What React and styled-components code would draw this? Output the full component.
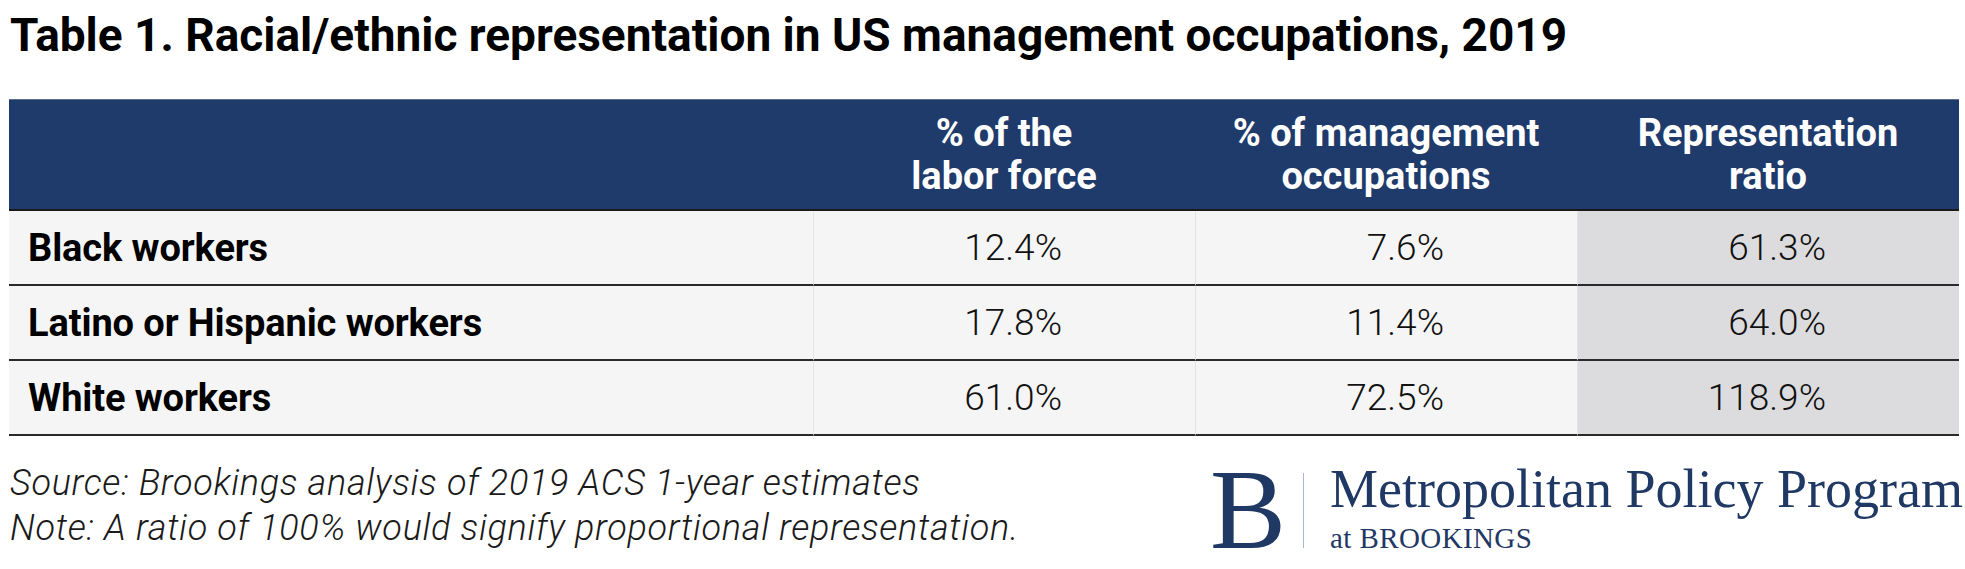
import React from 'react';
import styled, { createGlobalStyle } from 'styled-components';

const GlobalStyle = createGlobalStyle`
    html, body {
        margin: 0;
        padding: 0;
        background: #ffffff;
    }
    body {
        font-family: Roboto, "Liberation Sans", Arial, sans-serif;
        color: #000;
    }
`;

const Page = styled.div`
    width: 1965px;
    box-sizing: border-box;
    padding: 0 6px 0 9px;
`;

const Title = styled.h1`
    margin: 7px 0 37px 1px;
    font-size: 46px;
    line-height: 56px;
    font-weight: 700;
    white-space: nowrap;
`;

const Table = styled.div`
    display: grid;
    grid-template-columns: 1fr repeat(3, 382px);
`;

const HeadCell = styled.div`
    height: 109px;
    background: #1f3b6c;
    border-top: 1px solid #5d6f90;
    border-bottom: 2px solid #1a1a1a;
    color: #ffffff;
    font-size: 38px;
    line-height: 43px;
    font-weight: 700;
    display: flex;
    align-items: center;
    justify-content: center;
    text-align: center;
    box-sizing: content-box;
    margin-top: -1px;
`;

const Cell = styled.div`
    height: 73px;
    box-sizing: content-box;
    border-bottom: 2px solid #2a2a2a;
    border-left: ${(props) => (props.$first ? 'none' : '1px solid #e4e4e4')};
    background: ${(props) => (props.$shade ? '#dcdcde' : '#f5f5f5')};
    display: flex;
    align-items: center;
    white-space: nowrap;
`;

const Label = styled(Cell)`
    padding-left: 19px;
    font-size: 38px;
    font-weight: 700;
    letter-spacing: -0.1px;
`;

const Num = styled(Cell)`
    justify-content: flex-end;
    padding-right: 133px;
    font-size: 37px;
    font-weight: 300;
    color: #111;
`;

const Footer = styled.div`
    display: flex;
    justify-content: space-between;
    align-items: flex-start;
    margin-top: 18px;
`;

const Notes = styled.div`
    padding-top: 7px;
    padding-left: 1px;
    font-size: 36px;
    line-height: 45px;
    letter-spacing: 0.7px;
    font-style: italic;
    font-weight: 300;
    color: #1a1a1a;
    white-space: nowrap;
`;

const Logo = styled.div`
    display: flex;
    align-items: flex-start;
    color: #1f3864;
    font-family: "Liberation Serif", "Times New Roman", serif;
    margin-right: -4px;
`;

const LogoMark = styled.div`
    font-size: 114px;
    line-height: 112px;
`;

const Divider = styled.div`
    width: 1px;
    height: 75px;
    margin: 19px 26px 0 17px;
    background: #a9b6d2;
`;

const LogoText = styled.div`
    display: flex;
    flex-direction: column;
    padding-top: 8px;
`;

const ProgramName = styled.div`
    font-size: 54px;
    line-height: 54px;
    white-space: nowrap;
`;

const AtBrookings = styled.div`
    font-size: 29px;
    line-height: 29px;
    margin-top: 8px;
    letter-spacing: 0.4px;
    white-space: nowrap;
`;

const rows = [
    { label: 'Black workers', labor: '12.4%', mgmt: '7.6%', ratio: '61.3%' },
    { label: 'Latino or Hispanic workers', labor: '17.8%', mgmt: '11.4%', ratio: '64.0%' },
    { label: 'White workers', labor: '61.0%', mgmt: '72.5%', ratio: '118.9%' },
];

const App = () => {
    return (
        <>
            <GlobalStyle />
            <Page>
                <Title>Table 1. Racial/ethnic representation in US management occupations, 2019</Title>
                <Table>
                    <HeadCell></HeadCell>
                    <HeadCell>% of the<br />labor force</HeadCell>
                    <HeadCell>% of management<br />occupations</HeadCell>
                    <HeadCell>Representation<br />ratio</HeadCell>
                    {rows.map((r) => (
                        <React.Fragment key={r.label}>
                            <Label $first>{r.label}</Label>
                            <Num>{r.labor}</Num>
                            <Num>{r.mgmt}</Num>
                            <Num $shade>{r.ratio}</Num>
                        </React.Fragment>
                    ))}
                </Table>
                <Footer>
                    <Notes>
                        Source: Brookings analysis of 2019 ACS 1-year estimates<br />
                        Note: A ratio of 100% would signify proportional representation.
                    </Notes>
                    <Logo>
                        <LogoMark>B</LogoMark>
                        <Divider />
                        <LogoText>
                            <ProgramName>Metropolitan Policy Program</ProgramName>
                            <AtBrookings>at BROOKINGS</AtBrookings>
                        </LogoText>
                    </Logo>
                </Footer>
            </Page>
        </>
    );
}

export default App;
